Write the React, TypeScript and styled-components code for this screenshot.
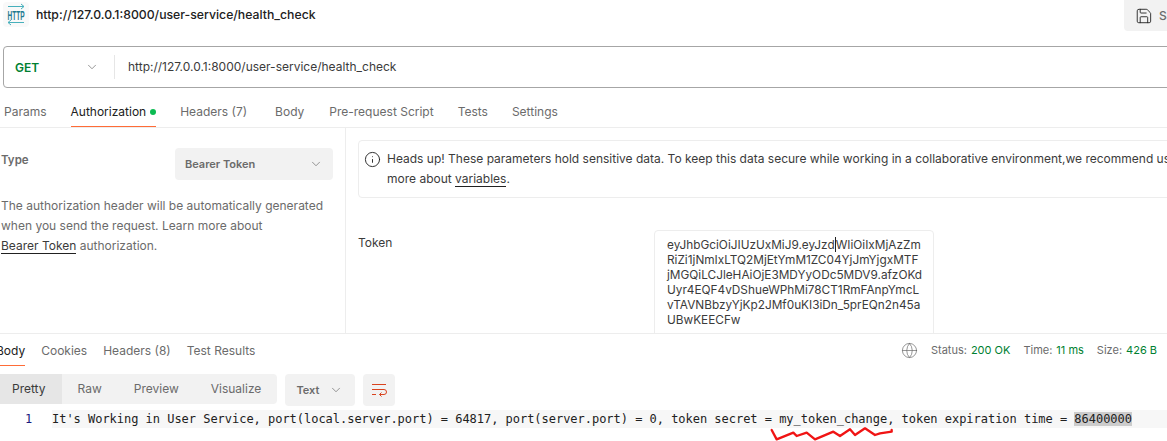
import React, { FC } from 'react';
import styled, { createGlobalStyle } from 'styled-components';
import { ChevronDown, Save, Info, Globe } from 'lucide-react';

const GlobalStyle = createGlobalStyle`
  html, body {
    margin: 0;
    padding: 0;
    background: #fff;
    overflow: hidden;
  }
  * {
    box-sizing: border-box;
  }
`;

const Page = styled.div`
  position: relative;
  width: 1167px;
  height: 441px;
  overflow: hidden;
  display: flex;
  flex-direction: column;
  font-family: Inter, "Liberation Sans", sans-serif;
  font-size: 12px;
  color: #212121;
`;

const TitleBar = styled.div`
  height: 46px;
  flex: none;
  display: flex;
  align-items: flex-start;
  padding-left: 3px;
`;

const HttpBadge = styled.div`
  width: 26px;
  height: 25px;
  margin-top: 2px;
  background: #f9f9f9;
  border-radius: 4px;
  display: flex;
  align-items: center;
  justify-content: center;
`;

const RequestName = styled.div`
  margin-left: 7px;
  line-height: 29px;
  font-weight: 500;
  font-size: 12.25px;
`;

const SaveButton = styled.div`
  margin-left: auto;
  margin-right: -20px;
  width: 63px;
  height: 31px;
  padding-left: 11px;
  display: flex;
  align-items: center;
  gap: 6px;
  background: #f2f2f2;
  border-bottom-left-radius: 4px;
  color: #6b6b6b;
  font-weight: 500;
`;

const UrlBar = styled.div`
  flex: none;
  height: 42px;
  margin-left: 3px;
  margin-right: -10px;
  display: flex;
  align-items: center;
  border: 1px solid #a6a6a6;
  border-radius: 4px;
`;

const Method = styled.div`
  width: 110px;
  flex: none;
  padding-left: 11px;
  padding-right: 15px;
  display: flex;
  align-items: center;
  justify-content: space-between;
  font-weight: 600;
  color: #007f31;
`;

const UrlText = styled.div`
  height: 24px;
  line-height: 23px;
  border-left: 1px solid #e6e6e6;
  padding-left: 13px;
  color: #3b3b3b;
`;

const RequestTabs = styled.div`
  flex: none;
  height: 40px;
  padding-left: 4px;
  display: flex;
  gap: 24px;
  border-bottom: 1px solid #ededed;
`;

const Tab = styled.div<{ $active?: boolean; $extra?: number }>`
  height: 39px;
  display: flex;
  align-items: center;
  gap: 4px;
  padding-top: 8px;
  margin-right: ${(p) => p.$extra ?? 0}px;
  color: ${(p) => (p.$active ? '#212121' : '#6b6b6b')};
  font-size: 12px;
  ${(p) => p.$active && 'box-shadow: inset 0 -1px 0 #ff6c37;'}
`;

const GreenDot = styled.span`
  width: 6px;
  height: 6px;
  border-radius: 50%;
  background: #0cbb52;
`;

const AuthArea = styled.div`
  flex: none;
  height: 206px;
  display: flex;
  border-bottom: 1px solid #ededed;
  overflow: hidden;
`;

const AuthSide = styled.div`
  width: 346px;
  flex: none;
  padding: 20px 12px 0 1px;
  border-right: 1px solid #ededed;
`;

const TypeRow = styled.div`
  display: flex;
  align-items: flex-start;
  justify-content: space-between;
`;

const TypeLabel = styled.div`
  font-weight: 600;
  font-size: 11.5px;
  color: #6b6b6b;
  line-height: 24px;
`;

const TypeSelect = styled.div`
  width: 158px;
  height: 32px;
  padding: 0 10px;
  display: flex;
  align-items: center;
  justify-content: space-between;
  background: #f2f2f2;
  border-radius: 4px;
  color: #6b6b6b;
  font-size: 11px;
  font-weight: 600;
`;

const AuthHelp = styled.p`
  margin: 16px 0 0;
  line-height: 20px;
  color: #6b6b6b;
  font-size: 12px;
  white-space: nowrap;
`;

const DocLink = styled.span`
  color: #3b3b3b;
  border-bottom: 1px solid #212121;
`;

const AuthMain = styled.div`
  flex: 1;
  min-width: 0;
  padding: 12px 0 0 12px;
`;

const Notice = styled.div`
  height: 58px;
  margin-right: -20px;
  padding: 8px 0 0 5px;
  display: flex;
  gap: 6px;
  border: 1px solid #ededed;
  border-radius: 4px;
  overflow: hidden;
`;

const NoticeIcon = styled.div`
  flex: none;
  height: 20px;
  display: flex;
  align-items: center;
`;

const NoticeText = styled.div`
  line-height: 20px;
  font-size: 12px;
  white-space: nowrap;
  color: #3b3b3b;
`;

const TokenRow = styled.div`
  margin-top: 32px;
  display: grid;
  grid-template-columns: 296px 280px;
`;

const TokenLabel = styled.div`
  padding-top: 5px;
  font-size: 12px;
  color: #3b3b3b;
`;

const TokenBox = styled.div`
  height: 110px;
  padding: 6px 12px;
  border: 1px solid #ededed;
  border-radius: 4px;
  line-height: 15px;
  font-size: 11.8px;
  color: #3b3b3b;
  white-space: nowrap;
`;

const Caret = styled.span`
  display: inline-block;
  width: 1px;
  height: 15px;
  vertical-align: -3px;
  background: #212121;
`;

const ResponseBar = styled.div`
  flex: none;
  height: 32px;
  margin-left: -4px;
  padding-right: 10px;
  display: flex;
  gap: 16px;
`;

const ResponseTab = styled.div<{ $active?: boolean }>`
  height: 32px;
  display: flex;
  align-items: center;
  font-size: 12px;
  color: ${(p) => (p.$active ? '#212121' : '#6b6b6b')};
  ${(p) => p.$active && 'box-shadow: inset 0 -1px 0 #ff6c37;'}
`;

const Meta = styled.div`
  margin-left: auto;
  height: 32px;
  display: flex;
  align-items: center;
  gap: 13px;
  font-size: 11px;
  color: #6b6b6b;
`;

const MetaValue = styled.span`
  color: #007f31;
  margin-left: 4px;
`;

const ViewBar = styled.div`
  flex: none;
  margin-top: 8px;
  height: 32px;
  display: flex;
  align-items: flex-start;
`;

const ViewModes = styled.div`
  height: 30px;
  margin-left: -4px;
  display: flex;
  background: #f2f2f2;
  border-radius: 4px;
  overflow: hidden;
`;

const ViewMode = styled.div<{ $active?: boolean }>`
  padding: 0 16px;
  line-height: 29px;
  font-size: 12px;
  color: ${(p) => (p.$active ? '#3b3b3b' : '#6b6b6b')};
  background: ${(p) => (p.$active ? '#e6e6e6' : 'transparent')};
`;

const FormatSelect = styled.div`
  width: 70px;
  height: 32px;
  margin-left: 8px;
  padding: 0 12px 0 11px;
  display: flex;
  align-items: center;
  justify-content: space-between;
  background: #f2f2f2;
  border-radius: 4px;
  font-size: 11px;
  font-weight: 600;
  color: #6b6b6b;
`;

const WrapButton = styled.div`
  width: 32px;
  height: 32px;
  margin-left: 8px;
  display: flex;
  align-items: center;
  justify-content: center;
  background: #f2f2f2;
  border-radius: 4px;
`;

const CodeRow = styled.div`
  flex: none;
  margin-top: 4px;
  height: 18px;
  display: flex;
  font-family: "DejaVu Sans Mono", "Liberation Mono", monospace;
  font-size: 12px;
  letter-spacing: -0.025px;
  line-height: 18px;
`;

const LineNumber = styled.div`
  width: 52px;
  flex: none;
  padding-left: 25px;
  color: #1a1a7e;
`;

const CodeLine = styled.div`
  flex: 1;
  background: #f7f7f7;
  white-space: pre;
  color: #212121;
`;

const Selected = styled.span`
  background: #cccccc;
`;

const Squiggle = styled.svg`
  position: absolute;
  left: 765px;
  top: 410px;
  pointer-events: none;
`;

const tokenLines = [
  'RiZi1jNmIxLTQ2MjEtYmM1ZC04YjJmYjgxMTF',
  'jMGQiLCJleHAiOjE3MDYyODc5MDV9.afzOKd',
  'Uyr4EQF4vDShueWPhMi78CT1RmFAnpYmcL',
  'vTAVNBbzyYjKp2JMf0uKI3iDn_5prEQn2n45a',
  'UBwKEECFw',
];

const HttpIcon: FC = () => (
  <svg width="24" height="23" viewBox="0 0 24 23" fill="none">
    <path d="M4 3.5h16M17 1l3 2.5L17 6" stroke="#47b0bc" strokeWidth="1" />
    <path d="M20 19.5H4M7 17l-3 2.5L7 22" stroke="#47b0bc" strokeWidth="1" />
    <text
      x="12"
      y="16.5"
      textAnchor="middle"
      fontSize="12"
      fontWeight="700"
      fontFamily="Liberation Sans, sans-serif"
      fill="#1f7a90"
      textLength="17"
      lengthAdjust="spacingAndGlyphs"
    >
      HTTP
    </text>
  </svg>
);

const WrapIcon: FC = () => (
  <svg width="16" height="16" viewBox="0 0 16 16" fill="none" stroke="#d9431e" strokeWidth="1">
    <path d="M1 2.5h14M1 7.5h12a2.5 2.5 0 0 1 0 5H8.5M10.5 10.5l-2 2 2 2M1 12.5h4" />
  </svg>
);

const App: FC = () => {
  return (
    <Page>
      <GlobalStyle />
      <TitleBar>
        <HttpBadge>
          <HttpIcon />
        </HttpBadge>
        <RequestName>http://127.0.0.1:8000/user-service/health_check</RequestName>
        <SaveButton>
          <Save size={18} strokeWidth={1.2} color="#212121" />
          Save
        </SaveButton>
      </TitleBar>

      <UrlBar>
        <Method>
          GET
          <ChevronDown size={14} strokeWidth={1.2} color="#6b6b6b" />
        </Method>
        <UrlText>http://127.0.0.1:8000/user-service/health_check</UrlText>
      </UrlBar>

      <RequestTabs>
        <Tab>Params</Tab>
        <Tab $active>
          Authorization
          <GreenDot />
        </Tab>
        <Tab $extra={4}>Headers (7)</Tab>
        <Tab $extra={1}>Body</Tab>
        <Tab>Pre-request Script</Tab>
        <Tab>Tests</Tab>
        <Tab>Settings</Tab>
      </RequestTabs>

      <AuthArea>
        <AuthSide>
          <TypeRow>
            <TypeLabel>Type</TypeLabel>
            <TypeSelect>
              Bearer Token
              <ChevronDown size={14} strokeWidth={1.2} color="#6b6b6b" />
            </TypeSelect>
          </TypeRow>
          <AuthHelp>
            The authorization header will be automatically generated
            <br />
            when you send the request. Learn more about
            <br />
            <DocLink>Bearer Token</DocLink> authorization.
          </AuthHelp>
        </AuthSide>
        <AuthMain>
          <Notice>
            <NoticeIcon>
              <Info size={17} strokeWidth={1.3} color="#212121" />
            </NoticeIcon>
            <NoticeText>
              Heads up! These parameters hold sensitive data. To keep this data secure while working in a collaborative
              environment,we recommend us
              <br />
              more about <DocLink>variables</DocLink>.
            </NoticeText>
          </Notice>
          <TokenRow>
            <TokenLabel>Token</TokenLabel>
            <TokenBox>
              eyJhbGciOiJIUzUxMiJ9.eyJzd
              <Caret />
              WIiOiIxMjAzZm
              {tokenLines.map((line) => (
                <div key={line}>{line}</div>
              ))}
            </TokenBox>
          </TokenRow>
        </AuthMain>
      </AuthArea>

      <ResponseBar>
        <ResponseTab $active>Body</ResponseTab>
        <ResponseTab>Cookies</ResponseTab>
        <ResponseTab>Headers (8)</ResponseTab>
        <ResponseTab>Test Results</ResponseTab>
        <Meta>
          <Globe size={17} strokeWidth={1} color="#6b6b6b" />
          <span>
            Status:<MetaValue>200 OK</MetaValue>
          </span>
          <span>
            Time:<MetaValue>11 ms</MetaValue>
          </span>
          <span>
            Size:<MetaValue>426 B</MetaValue>
          </span>
        </Meta>
      </ResponseBar>

      <ViewBar>
        <ViewModes>
          <ViewMode $active>Pretty</ViewMode>
          <ViewMode>Raw</ViewMode>
          <ViewMode>Preview</ViewMode>
          <ViewMode>Visualize</ViewMode>
        </ViewModes>
        <FormatSelect>
          Text
          <ChevronDown size={14} strokeWidth={1.2} color="#6b6b6b" />
        </FormatSelect>
        <WrapButton>
          <WrapIcon />
        </WrapButton>
      </ViewBar>

      <CodeRow>
        <LineNumber>1</LineNumber>
        <CodeLine>
          It's Working in User Service, port(local.server.port) = 64817, port(server.port) = 0, token secret =
          my_token_change, token expiration time = <Selected>86400000</Selected>
        </CodeLine>
      </CodeRow>

      <Squiggle width="140" height="31" viewBox="0 0 420 93" fill="none">
        <path
          d="M20 60L35 88L85 68L95 78L125 68L150 88L205 65L225 78L255 58L270 75L300 55L330 75L345 70L380 65L380 60"
          stroke="#f01414"
          strokeWidth="7"
          strokeLinejoin="round"
          strokeLinecap="round"
        />
      </Squiggle>
    </Page>
  );
};

export default App;
